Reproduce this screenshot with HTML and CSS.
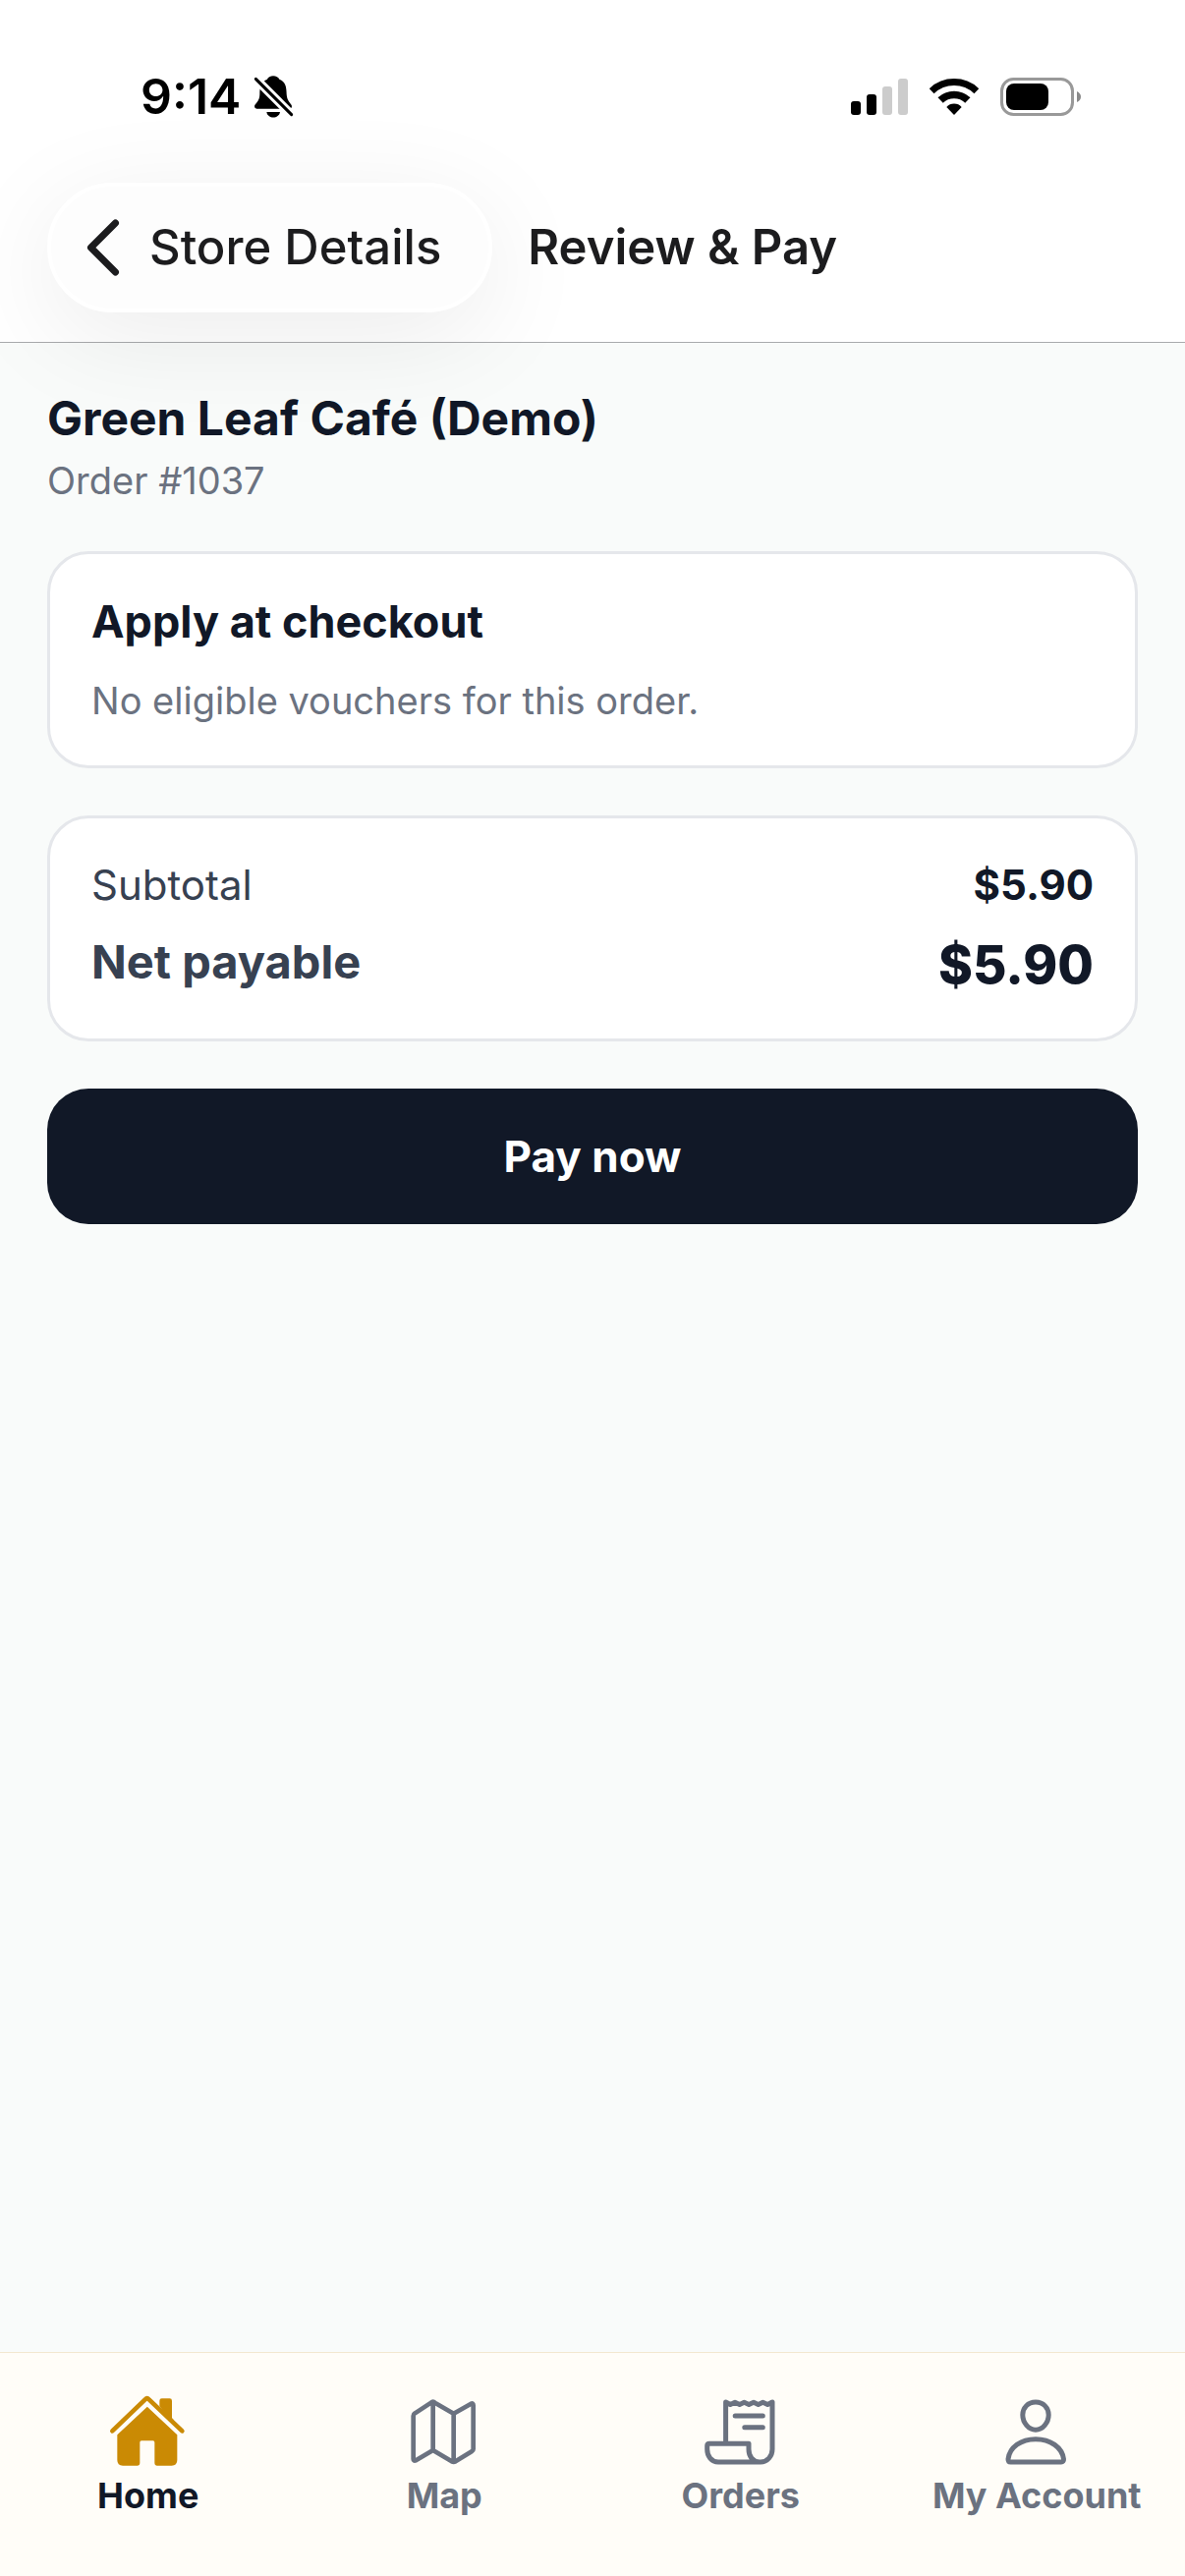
FILE: index.html
```html
<!DOCTYPE html>
<html lang="en">
<head>
<meta charset="utf-8">
<meta name="viewport" content="width=device-width, initial-scale=1">
<title>Review &amp; Pay</title>
<link rel="stylesheet" href="styles.css">
</head>
<body>
<div class="status">
  <div class="status-left">
    <time class="clock">9:14</time>
    <svg class="bell" viewBox="414 78 123 135" aria-label="Silent mode">
      <path d="M417 175C417 167 433 160 433 138C433 114 438 99 456 92C460 78 488 78 493 92C511 99 515 114 515 138C516 160 531 167 531 175Q531 182 524 182H424Q417 182 417 175ZM454 192H495C492 214 457 214 454 192Z"/>
      <path class="bell-gap" d="M411 81L540 210"/>
      <path class="bell-slash" d="M421 91L530 200"/>
    </svg>
  </div>
  <div class="status-right">
    <svg class="signal" viewBox="0 0 58 37" aria-label="Signal">
      <rect y="23" width="10" height="14" rx="3"/>
      <rect x="16" y="16" width="10" height="21" rx="3"/>
      <rect class="dim" x="32" y="8" width="10" height="29" rx="3"/>
      <rect class="dim" x="48" width="10" height="37" rx="3"/>
    </svg>
    <svg class="wifi" viewBox="316 87 150 111" aria-label="Wi-Fi">
      <path class="arc-outer" d="M322.5 125A99.5 99.5 0 0 1 459.5 125"/>
      <path class="arc-inner" d="M349.4 153A60.5 60.5 0 0 1 432.6 153"/>
      <path d="M391 198L368 174C379 160 403 160 414 174Z"/>
    </svg>
    <svg class="battery" viewBox="0 0 83 39" aria-label="Battery">
      <rect class="battery-case" x="1.5" y="1.5" width="72" height="36" rx="12"/>
      <rect x="6" y="6" width="43" height="27" rx="8"/>
      <path class="battery-tip" d="M78 14Q82 16 82 19.5Q82 23 78 25Z"/>
    </svg>
  </div>
</div>
<header class="header">
  <a class="back" href="#store">
    <svg class="chevron" viewBox="0 0 34 58" aria-hidden="true"><path d="M29.5 4L4.5 29L29.5 54"/></svg>
    Store Details
  </a>
  <h1 class="title">Review &amp; Pay</h1>
</header>
<main class="content">
  <div class="store">
    <h2 class="store-name">Green Leaf Café (Demo)</h2>
    <p class="muted">Order #1037</p>
  </div>
  <section class="card vouchers">
    <h3 class="card-title">Apply at checkout</h3>
    <p class="muted">No eligible vouchers for this order.</p>
  </section>
  <dl class="card totals">
    <div class="row"><dt class="label">Subtotal</dt><dd class="amount">$5.90</dd></div>
    <div class="row"><dt class="label label-net">Net payable</dt><dd class="amount amount-net">$5.90</dd></div>
  </dl>
  <button class="pay" type="button">Pay now</button>
</main>
<nav class="tabs">
  <a class="tab tab-active" href="#home">
    <svg class="icon icon-solid" viewBox="146 160 252 252" aria-hidden="true">
      <path d="M306 208V192Q306 185 313 185H337Q344 185 344 192V245L350 251L330 240Z"/>
      <path class="roof" d="M162 284L262 188Q268 182 274 188L375 284"/>
      <path d="M268.5 210L360 296V373Q360 390 343 390H298Q291 390 291 383V319Q291 314 286 314H251Q246 314 246 319V383Q246 390 239 390H194Q177 390 177 373V296Z"/>
    </svg>
    Home
  </a>
  <a class="tab" href="#map">
    <svg class="icon" viewBox="1051 160 252 252" aria-hidden="true">
      <path class="line-map" d="M1143 195Q1140 195 1137 198L1088 230Q1083 233 1083 238V370Q1083 377 1091 374L1143 343L1200 377Q1206 380 1212 377L1261 347Q1266 344 1266 339V206Q1266 198 1259 201L1206 231L1149 198Q1146 195 1143 195ZM1143 197V343M1206 231V378"/>
    </svg>
    Map
  </a>
  <a class="tab" href="#orders">
    <svg class="icon" viewBox="0 0 84 84" aria-hidden="true">
      <path class="line" d="M26.6 54V12L31.3 14.5L36 12.3L40.7 14.5L45.4 12.3L50.2 14.5L55 12.3L59.7 14.5L64.4 12.3L69.2 14.5L74 12V60C74 67 69 73 62 73H19C12 73 7.7 67 7.7 60V56.5Q7.7 54.3 10 54.3H50V60C50 67 54 73 61 73M36.2 26H64.3M45.8 37.7H64.3"/>
    </svg>
    Orders
  </a>
  <a class="tab" href="#account">
    <svg class="icon" viewBox="0 0 84 84" aria-hidden="true">
      <path class="line" d="M41 12C49 12 54.2 18 54.2 25C54.2 33 48 40.2 41 40.2C34 40.2 27.8 33 27.8 25C27.8 18 33 12 41 12ZM13 70C14.5 58 26 49.7 41 49.7C56 49.7 68 58 69.5 70Q69.6 73 67 73H15.5Q13 73 13 70Z"/>
    </svg>
    My Account
  </a>
</nav>
</body>
</html>
```
FILE: styles.css
```css
* { box-sizing: border-box; }

body {
  margin: 0;
  min-height: 100vh;
  display: flex;
  flex-direction: column;
  background: #f9fbfa;
  color: #111827;
  font-family: Inter, "Liberation Sans", sans-serif;
}

h1, h2, h3, p, dl, dd { margin: 0; }
a { color: inherit; text-decoration: none; }
svg { display: block; flex: none; }

.status {
  display: flex;
  justify-content: space-between;
  align-items: center;
  padding: 67px 105px 57px 143px;
  background: #fff;
  color: #000;
}
.status-left { display: flex; align-items: center; gap: 13px; }
.status-right { display: flex; align-items: center; gap: 22px; }
.clock { font-size: 50px; line-height: 62px; font-weight: 600; }
.bell { width: 41px; height: 45px; }
.bell-gap { stroke: #fff; stroke-width: 27; }
.bell-slash { stroke: #000; stroke-width: 9; stroke-linecap: round; }
.signal { width: 58px; height: 37px; }
.dim { fill: #ccc; }
.wifi { width: 50px; height: 37px; }
.arc-outer { fill: none; stroke: #000; stroke-width: 21; }
.arc-inner { fill: none; stroke: #000; stroke-width: 23; }
.battery { width: 83px; height: 39px; }
.battery-case { fill: none; stroke: #999; stroke-width: 3; }
.battery-tip { fill: #8a8a8a; }

.header {
  position: relative;
  z-index: 1;
  display: flex;
  align-items: center;
  gap: 36px;
  padding: 0 48px 30px;
  background: #fff;
  border-bottom: 1px solid #a9abad;
  color: #1c1c1e;
}
.back {
  display: flex;
  align-items: center;
  gap: 30px;
  padding: 33px 48px 33px 36px;
  border: 4px solid #fff;
  border-radius: 66px;
  background: #fdfdfd;
  box-shadow: 0 24px 110px rgba(0, 0, 0, 0.08);
  font-size: 49px;
  line-height: 58px;
  font-weight: 500;
}
.chevron { width: 34px; height: 58px; }
.chevron path {
  fill: none;
  stroke: #1c1c1e;
  stroke-width: 7;
  stroke-linecap: round;
  stroke-linejoin: round;
}
.title { font-size: 49px; line-height: 58px; font-weight: 600; }

.content {
  flex: 1;
  display: flex;
  flex-direction: column;
  gap: 48px;
  padding: 48px;
}
.store { display: grid; gap: 12px; }
.store-name { font-size: 48px; line-height: 57px; font-weight: 700; }
.muted { font-size: 38px; line-height: 47px; color: #6b7280; }
.card {
  display: grid;
  padding: 42px;
  border: 3px solid #e5e7eb;
  border-radius: 42px;
  background: #fff;
}
.vouchers { gap: 30px; }
.totals { gap: 24px; }
.card-title { font-size: 45px; line-height: 54px; font-weight: 700; }
.row { display: flex; justify-content: space-between; align-items: flex-start; }
.label { font-size: 42px; line-height: 51px; color: #374151; }
.label-net { font-size: 47px; line-height: 57px; font-weight: 700; }
.amount { font-size: 42px; line-height: 51px; font-weight: 700; }
.amount-net { font-size: 53px; line-height: 65px; font-weight: 800; }
.pay {
  padding: 42px;
  border: 0;
  border-radius: 42px;
  background: #111827;
  color: #fff;
  font: 700 44px/54px Inter, "Liberation Sans", sans-serif;
}

.tabs {
  display: grid;
  grid-template-columns: repeat(4, 1fr);
  padding: 38px 0 61px;
  border-top: 1px solid #f3e8d0;
  background: #fffdf8;
}
.tab {
  display: flex;
  flex-direction: column;
  align-items: center;
  gap: 2px;
  color: #6b7280;
  font-size: 36px;
  line-height: 42px;
  font-weight: 700;
}
.tab-active { color: #111827; }
.icon { width: 84px; height: 84px; fill: none; }
.icon-solid { fill: #ca8a04; }
.line, .line-map {
  stroke: #6b7280;
  stroke-width: 5;
  stroke-linecap: round;
  stroke-linejoin: round;
}
.line-map { stroke-width: 14; }
.roof { fill: none; stroke: #ca8a04; stroke-width: 14; stroke-linecap: round; }
```
